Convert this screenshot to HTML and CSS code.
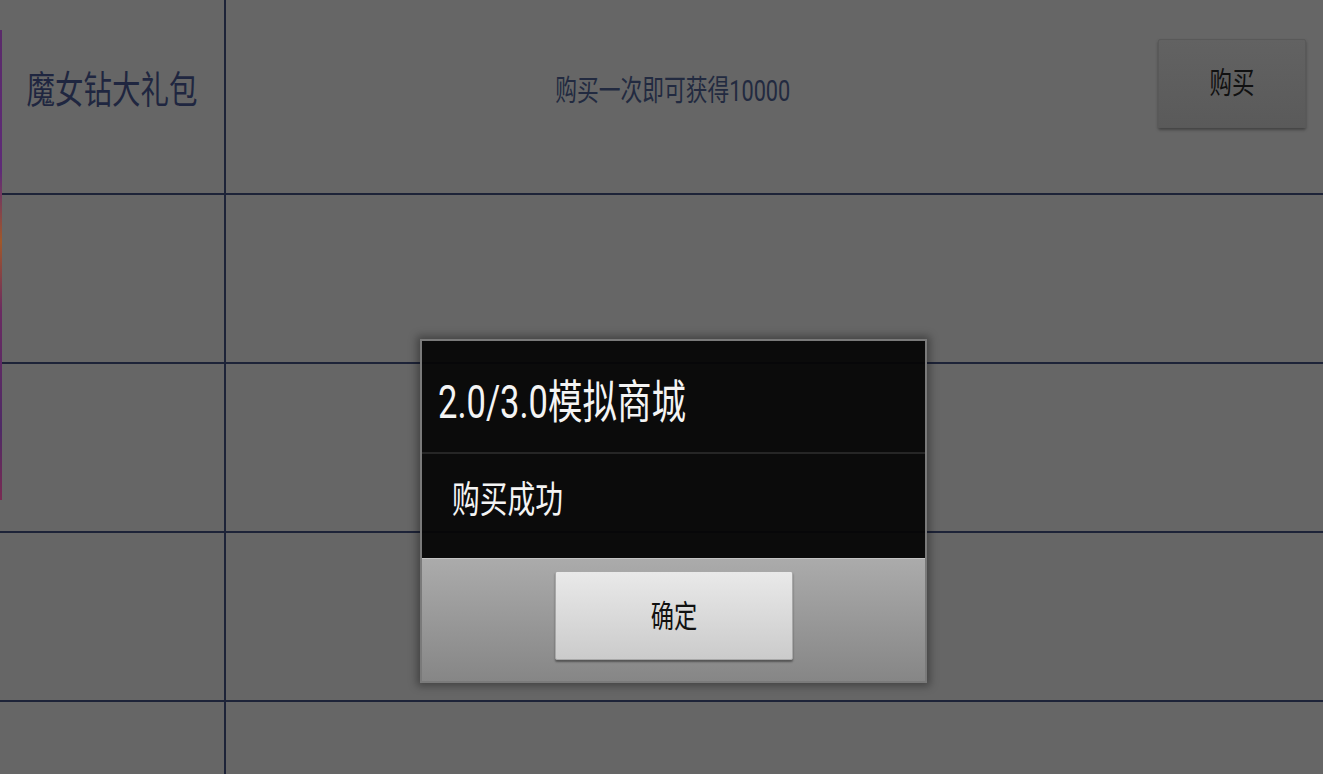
FILE: index.html
```html
<!DOCTYPE html>
<html lang="zh-CN">
<head>
    <meta charset="UTF-8">
    <title>2.0/3.0模拟商城</title>
    <link rel="stylesheet" href="styles.css">
</head>
<body>
    <div class="edge"></div>
    <div class="shop">
        <div class="row first">
            <div class="name"><span class="sx">魔女钻大礼包</span></div>
            <div class="desc"><span class="sx">购买一次即可获得10000</span></div>
            <div class="action">
                <button class="buy"><span class="sx">购买</span></button>
            </div>
        </div>
        <div class="row"><div class="name"></div><div class="desc"></div></div>
        <div class="row"><div class="name"></div><div class="desc"></div></div>
        <div class="row"><div class="name"></div><div class="desc"></div></div>
        <div class="row last"><div class="name"></div><div class="desc"></div></div>
    </div>

    <div class="dialog">
        <div class="dialog-title"><span class="sx left">2.0/3.0模拟商城</span></div>
        <div class="dialog-body"><span class="sx left">购买成功</span></div>
        <div class="dialog-buttons">
            <button class="ok"><span class="sx">确定</span></button>
        </div>
    </div>
</body>
</html>
```

FILE: styles.css
```css
body {
    margin: 0;
    width: 1323px;
    height: 774px;
    overflow: hidden;
    background: #666666;
    font-family: Roboto, "Noto Sans CJK SC", sans-serif;
    position: relative;
}
.sx {
    display: inline-block;
    transform: scaleX(0.75);
    transform-origin: center center;
    white-space: nowrap;
}
.sx.left {
    transform-origin: left center;
}
.edge {
    position: absolute;
    left: 0;
    top: 30px;
    width: 2px;
    height: 470px;
    background: linear-gradient(#5a2a6a, #5e2a78 30%, #a0582a 45%, #6a2a62 60%, #4e2a66 85%, #7a2a52);
}
.shop {
    display: flex;
    flex-direction: column;
}
.row {
    display: flex;
    height: 167px;
    border-bottom: 2px solid #1d2338;
}
.row.first {
    height: 193px;
}
.row.last {
    height: 73px;
    border-bottom: none;
}
.name {
    width: 226px;
    border-right: 2px solid #1d2338;
    display: flex;
    align-items: center;
    justify-content: center;
    padding-bottom: 20px;
    box-sizing: border-box;
    font-size: 38px;
    color: #1f2640;
}
.desc {
    flex: 1;
    display: flex;
    align-items: center;
    justify-content: center;
    padding-bottom: 18px;
    font-size: 29px;
    color: #222a40;
}
.action {
    width: 203px;
    padding: 39px 0 0 38px;
    box-sizing: border-box;
}
.buy {
    width: 148px;
    height: 89px;
    border: 1px solid #595959;
    border-radius: 2px;
    background: linear-gradient(#626262, #5a5a5a);
    box-shadow: 0 2px 3px rgba(0, 0, 0, 0.35);
    font-family: inherit;
    font-size: 30px;
    color: #111;
    padding: 0 0 8px;
}
.dialog {
    position: absolute;
    left: 420px;
    top: 339px;
    width: 507px;
    height: 344px;
    box-sizing: border-box;
    border: 2px solid #7a7a7a;
    box-shadow: 0 0 8px 3px rgba(0, 0, 0, 0.35);
    display: flex;
    flex-direction: column;
    color: #f4f4f4;
}
.dialog-title {
    height: 113px;
    background: rgba(6, 6, 6, 0.95);
    display: flex;
    align-items: center;
    padding-left: 16px;
    padding-top: 2px;
    box-sizing: border-box;
    font-size: 46px;
    border-bottom: 2px solid #262626;
}
.dialog-body {
    height: 104px;
    background: rgba(6, 6, 6, 0.95);
    display: flex;
    align-items: center;
    padding-left: 30px;
    padding-bottom: 18px;
    box-sizing: border-box;
    font-size: 37px;
}
.dialog-buttons {
    flex: 1;
    background: linear-gradient(#ababab, #868686);
    border-top: 1px solid #c4c4c4;
    display: flex;
    justify-content: center;
    padding-top: 12px;
    box-sizing: border-box;
}
.ok {
    width: 238px;
    height: 89px;
    border: 1px solid #a8a8a8;
    border-radius: 2px;
    background: linear-gradient(#e9e9e9, #cbcbcb);
    box-shadow: 0 2px 2px rgba(0, 0, 0, 0.4);
    font-family: inherit;
    font-size: 31px;
    color: #111;
    padding: 0 0 4px;
}
```
